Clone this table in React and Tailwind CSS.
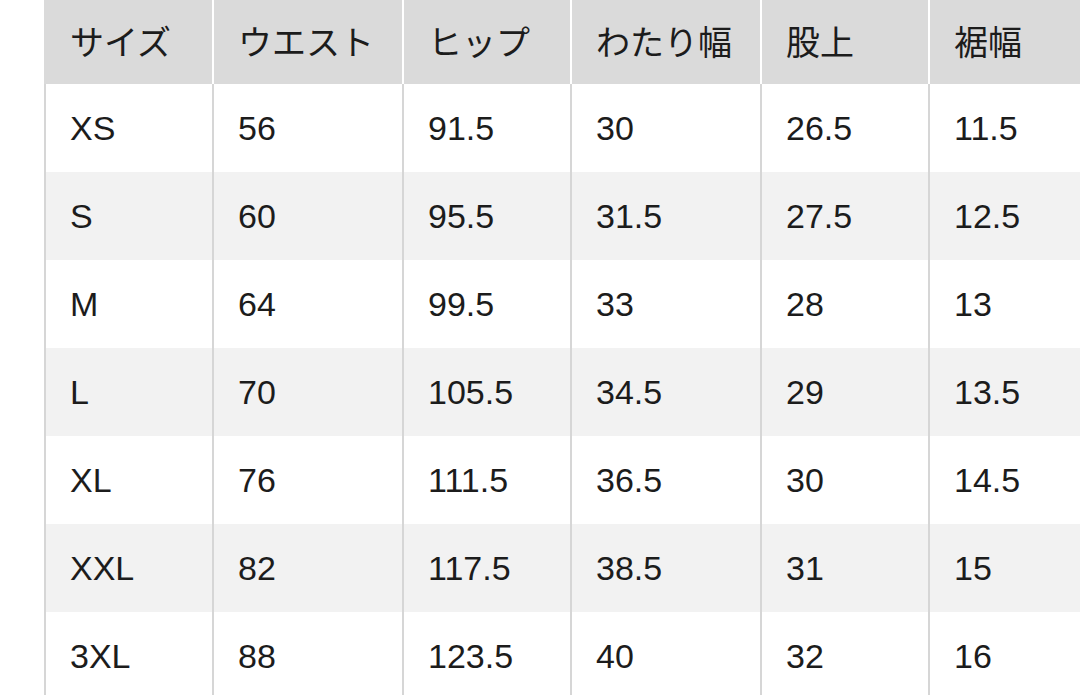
const headers = ["サイズ", "ウエスト", "ヒップ", "わたり幅", "股上", "裾幅"];

const rows = [
  ["XS", "56", "91.5", "30", "26.5", "11.5"],
  ["S", "60", "95.5", "31.5", "27.5", "12.5"],
  ["M", "64", "99.5", "33", "28", "13"],
  ["L", "70", "105.5", "34.5", "29", "13.5"],
  ["XL", "76", "111.5", "36.5", "30", "14.5"],
  ["XXL", "82", "117.5", "38.5", "31", "15"],
  ["3XL", "88", "123.5", "40", "32", "16"],
];

export default function App() {
  return (
    <div className="w-[1080px] h-[695px] overflow-hidden bg-white pl-[44px] text-[34px] text-[#1c1c1c] font-['Liberation_Sans','Noto_Sans_CJK_JP',sans-serif]">
      <div className="grid w-[1074px] grid-cols-[168px_190px_168px_190px_168px_190px]">
        {/* header */}
        {headers.map((h, i) => (
          <div
            key={h}
            className={`h-[84px] flex items-center pl-6 pb-[4px] bg-[#dadada] border-l-2 ${i === 0 ? "border-[#dadada]" : "border-white"} font-['Noto_Sans_CJK_JP',sans-serif]`}
          >
            {h}
          </div>
        ))}
        {/* body */}
        {rows.map((row, r) =>
          row.map((cell, c) => (
            <div
              key={r + "-" + c}
              className={`h-[88px] flex items-center pl-6 border-l-2 border-[#d6d6d6] ${r % 2 === 1 ? "bg-[#f2f2f2]" : "bg-white"}`}
            >
              {cell}
            </div>
          ))
        )}
      </div>
    </div>
  );
}
